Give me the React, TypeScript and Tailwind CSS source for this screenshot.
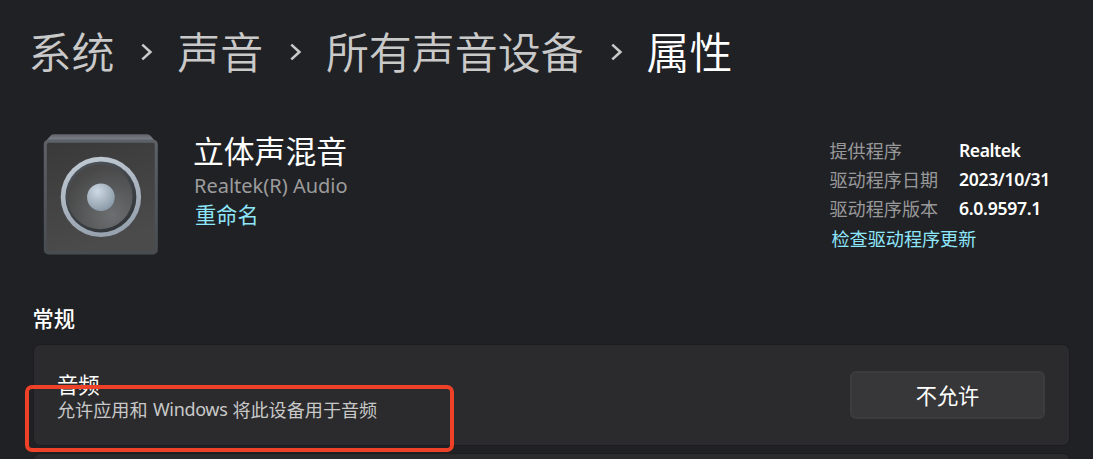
import type { ReactNode } from "react";

const PATH = ["系统", "声音", "所有声音设备"];

const DRIVER_INFO = [
  { label: "提供程序", value: "Realtek", tracking: "tracking-[-0.45px]" },
  { label: "驱动程序日期", value: "2023/10/31", tracking: "tracking-[-0.35px]" },
  { label: "驱动程序版本", value: "6.0.9597.1", tracking: "tracking-[-0.3px]" },
];

function Chevron() {
  return (
    <svg viewBox="0 0 12 18" className="ml-[3px] mt-[5px] h-[18px] w-3 shrink-0" fill="none">
      <path d="M1.3 1.6 9.4 9l-8.1 7.4" stroke="#c9c9c9" strokeWidth="2.6" />
    </svg>
  );
}

function SpeakerIcon() {
  return (
    <svg viewBox="0 0 116 122" className="h-[122px] w-[116px]">
      <defs>
        <linearGradient id="top" x1="0" y1="0" x2="0" y2="1">
          <stop offset="0" stopColor="#62646c" />
          <stop offset="0.5" stopColor="#777983" />
          <stop offset="1" stopColor="#4b4e54" />
        </linearGradient>
        <linearGradient id="box" x1="0" y1="0" x2="0.3" y2="1">
          <stop offset="0" stopColor="#393939" />
          <stop offset="1" stopColor="#4b4b4b" />
        </linearGradient>
        <linearGradient id="frame" x1="0" y1="0" x2="0" y2="1">
          <stop offset="0" stopColor="#5c6268" />
          <stop offset="1" stopColor="#474c51" />
        </linearGradient>
        <linearGradient id="ring" x1="0" y1="0" x2="0.3" y2="1">
          <stop offset="0" stopColor="#c3cdd6" />
          <stop offset="1" stopColor="#98a3b0" />
        </linearGradient>
        <linearGradient id="rim" x1="0" y1="0" x2="0.5" y2="1">
          <stop offset="0" stopColor="#50575c" />
          <stop offset="1" stopColor="#33373b" />
        </linearGradient>
        <radialGradient id="cone" cx="0.68" cy="0.78" r="0.75">
          <stop offset="0" stopColor="#6c6f71" />
          <stop offset="1" stopColor="#484848" />
        </radialGradient>
        <radialGradient id="dome" cx="0.38" cy="0.3" r="0.75">
          <stop offset="0" stopColor="#ced9e3" />
          <stop offset="1" stopColor="#8797a5" />
        </radialGradient>
      </defs>
      <path d="M11 1.2h93q2 0 4 2l6 7H1l6-7q1-2 4-2z" fill="url(#top)" />
      <rect x="0.8" y="6.8" width="114" height="114.6" rx="4.5" fill="url(#frame)" />
      <rect x="3.8" y="9.8" width="108" height="108.2" rx="2" fill="url(#box)" />
      <circle cx="57.9" cy="63.9" r="40.2" fill="url(#ring)" />
      <circle cx="57.9" cy="63.9" r="35.5" fill="url(#rim)" />
      <circle cx="57.1" cy="63.8" r="32.5" fill="url(#cone)" />
      <circle cx="57.9" cy="64.2" r="13.8" fill="url(#dome)" />
    </svg>
  );
}

function Card({ children }: { children?: ReactNode }) {
  return (
    <div className="flex h-[100px] shrink-0 items-center justify-between rounded-md bg-[#2b2b2d] pl-[23px] pr-6 ring-1 ring-[#1d1d1f]">
      {children}
    </div>
  );
}

export default function App() {
  return (
    <div className="relative h-[459px] w-[1093px] overflow-hidden bg-[#202124] font-['Noto_Sans_CJK_SC',sans-serif] text-white">
      {/* Breadcrumb */}
      <nav className="flex h-[99px] items-center pl-[28.5px] text-[43px] leading-[60px] font-[350] text-[#c9c9c9]">
        {PATH.map((name) => (
          <div key={name} className="flex items-center">
            <span>{name}</span>
            <div className="flex w-[62.7px] justify-center">
              <Chevron />
            </div>
          </div>
        ))}
        <span className="text-white">属性</span>
      </nav>

      {/* Device header */}
      <header className="flex h-[204px] items-start pl-[42.5px] pt-[34px]">
        <SpeakerIcon />
        <div className="ml-[34.5px] w-[300px]">
          <h1 className="-mt-[3px] text-[30.8px] leading-10 font-normal">立体声混音</h1>
          <p className="mt-[2px] ml-px font-['Noto_Sans'] text-[20px] leading-7 text-[#9c9c9d]">
            Realtek(R) Audio
          </p>
          <a className="-mt-0.5 ml-0.5 block text-[21.2px] leading-8 text-[#8ee6fb]">重命名</a>
        </div>
        <div className="ml-[336.5px] pt-[3px]">
          {DRIVER_INFO.map((row) => (
            <div key={row.label} className="flex h-[29px] items-center text-[18.1px] leading-[29px]">
              <span className="w-[129.5px] text-[#98989a]">{row.label}</span>
              <span className={`font-['Noto_Sans'] text-[17.6px] font-semibold whitespace-nowrap ${row.tracking}`}>
                {row.value}
              </span>
            </div>
          ))}
          <a className="-mt-px ml-0.5 block text-[18.1px] leading-8 text-[#8ee6fb]">检查驱动程序更新</a>
        </div>
      </header>

      {/* General */}
      <section className="flex flex-col gap-[9px] pl-[34px] pr-6">
        <h2 className="-ml-[1.5px] mb-[3px] h-[30px] text-[21.3px] leading-[30px] font-medium">常规</h2>
        <Card>
          <div className="pt-0.5">
            <div className="text-[21.3px] leading-[26px]">音频</div>
            <div className="flex text-[18.1px] leading-6 text-[#c8c8c8]">
              <span>允许应用和</span>
              <span className="mr-[5px] ml-[5.5px] font-['Noto_Sans'] text-[18px] tracking-[-0.35px]">Windows</span>
              <span>将此设备用于音频</span>
            </div>
          </div>
          <button className="h-12 w-[195px] rounded-md border-2 border-[#3c3c3f] bg-[#37373a] text-[21.2px] leading-7">
            不允许
          </button>
        </Card>
        <Card />
      </section>

      {/* Highlight marker over the description */}
      <div className="absolute top-[385px] left-[25px] h-[67px] w-[429px] rounded-[7px] border-4 border-[#ee4127]" />
    </div>
  );
}
